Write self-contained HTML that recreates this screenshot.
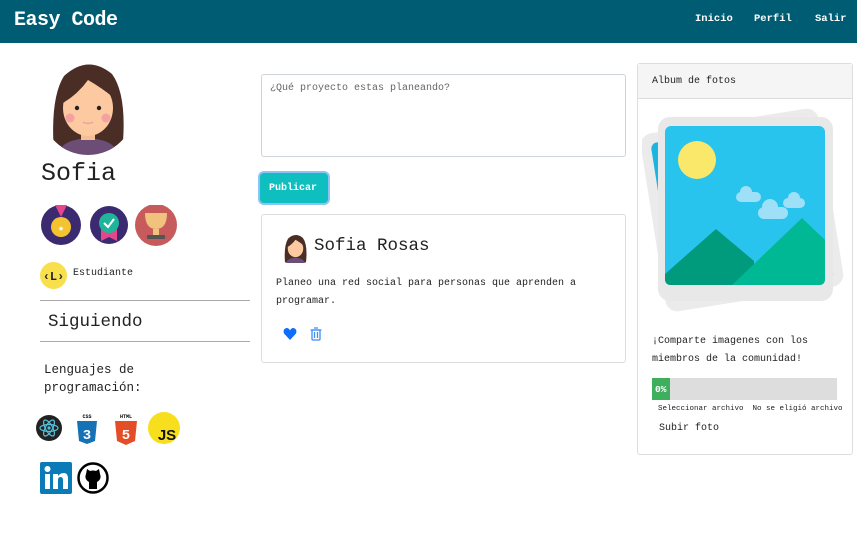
<!DOCTYPE html>
<html><head><meta charset="utf-8">
<style>
*{margin:0;padding:0;box-sizing:border-box}
body{width:857px;height:544px;background:#fff;font-family:"Liberation Mono","DejaVu Sans Mono",monospace;color:#222;position:relative;overflow:hidden}
.a{position:absolute}
.hdr{left:0;top:0;width:857px;height:43px;background:#005c73}
.t10{font-size:10px}
</style></head><body>
<div class="a hdr"></div>
<div class="a" style="left:14px;top:9px;font-size:20px;color:#fff;font-weight:bold;letter-spacing:-0.5px">Easy Code</div>
<div class="a" style="left:695px;top:13px;font-size:10.5px;color:#fff;font-weight:bold">Inicio</div>
<div class="a" style="left:754px;top:13px;font-size:10.5px;color:#fff;font-weight:bold">Perfil</div>
<div class="a" style="left:815px;top:13px;font-size:10.5px;color:#fff;font-weight:bold">Salir</div>

<svg class="a" style="left:50px;top:58px" width="76" height="97" viewBox="0 0 76 97">
<defs><clipPath id="c"><circle cx="38" cy="50" r="47"/></clipPath></defs>
<g clip-path="url(#c)">
<path d="M4 95 Q0 40 14 18 Q38 -4 62 16 Q78 38 72 95Z" fill="#4a2e25"/>
<path d="M8 97 Q10 82 38 80 Q66 82 68 97Z" fill="#6b4d76"/>
<rect x="31" y="66" width="14" height="16" fill="#f4bf95"/>
<ellipse cx="38" cy="50" rx="25" ry="28" fill="#fcc9a0"/>
<path d="M13 45 Q14 15 42 14 Q62 16 64 40 Q52 30 38 22 Q28 36 13 45Z" fill="#4a2e25"/>
<circle cx="27" cy="50" r="2.2" fill="#222"/><circle cx="49" cy="50" r="2.2" fill="#222"/>
<circle cx="20" cy="60" r="4.5" fill="#f4a1a1"/><circle cx="56" cy="60" r="4.5" fill="#f4a1a1"/>
<path d="M33 64 Q38 67 43 64" stroke="#e99" stroke-width="1.2" fill="none"/>
</g></svg>
<div class="a" style="left:41px;top:159px;font-size:25px">Sofia</div>

<svg class="a" style="left:41px;top:205px" width="138" height="42">
<circle cx="20" cy="20" r="20" fill="#3b2a70"/><path d="M14 0 L20 12 L26 0Z" fill="#e5478d"/><circle cx="20" cy="22" r="10" fill="#f4c430"/><text x="20" y="26" font-size="10" text-anchor="middle" fill="#fff">★</text>
<circle cx="68" cy="20" r="19" fill="#3b2a70"/><path d="M60 24 L60 36 L68 32 L76 36 L76 24Z" fill="#e5478d"/><circle cx="68" cy="18" r="10" fill="#1fb59a"/><path d="M63 18 L67 22 L73 14" stroke="#fff" stroke-width="2" fill="none"/>
<circle cx="115" cy="20" r="21" fill="#c75b5b"/><path d="M104 8 H126 Q126 24 115 24 Q104 24 104 8Z" fill="#f1c27d"/><rect x="112" y="24" width="6" height="6" fill="#f1c27d"/><rect x="106" y="30" width="18" height="4" fill="#555"/>
</svg>
<svg class="a" style="left:40px;top:262px" width="27" height="27"><circle cx="13.5" cy="13.5" r="13.5" fill="#f8df4c"/><text x="13.5" y="18" font-size="12" font-weight="bold" text-anchor="middle" fill="#222" font-family="Liberation Mono">‹L›</text></svg>
<div class="a t10" style="left:73px;top:268px">Estudiante</div>
<div class="a" style="left:40px;top:300px;width:210px;height:1px;background:#aaa"></div>
<div class="a" style="left:48px;top:312px;font-size:17.5px">Siguiendo</div>
<div class="a" style="left:40px;top:341px;width:210px;height:1px;background:#aaa"></div>
<div class="a" style="left:44px;top:361px;font-size:12.5px;line-height:18px">Lenguajes de<br>programación:</div>

<svg class="a" style="left:35px;top:412px" width="150" height="34">
<circle cx="14" cy="16" r="13" fill="#222"/><g stroke="#53c1de" fill="none" stroke-width="1.2"><ellipse cx="14" cy="16" rx="9" ry="3.5"/><ellipse cx="14" cy="16" rx="9" ry="3.5" transform="rotate(60 14 16)"/><ellipse cx="14" cy="16" rx="9" ry="3.5" transform="rotate(-60 14 16)"/></g><circle cx="14" cy="16" r="1.6" fill="#53c1de"/>
<text x="52" y="6" font-size="5" font-weight="bold" text-anchor="middle">CSS</text><path d="M42 9 H62 L60 29 L52 32 L44 29Z" fill="#1572b6"/><text x="52" y="27" font-size="14" font-weight="bold" text-anchor="middle" fill="#fff">3</text>
<text x="91" y="6" font-size="5" font-weight="bold" text-anchor="middle">HTML</text><path d="M80 9 H102 L100 29 L91 33 L82 29Z" fill="#e44d26"/><text x="91" y="27" font-size="14" font-weight="bold" text-anchor="middle" fill="#fff">5</text>
<circle cx="129" cy="16" r="16" fill="#f7df1e"/><text x="132" y="28" font-size="15" font-weight="bold" text-anchor="middle" fill="#111" font-family="Liberation Sans">JS</text>
</svg>
<svg class="a" style="left:40px;top:462px" width="70" height="32">
<rect x="0" y="0" width="32" height="32" rx="2" fill="#0a7bb6"/><rect x="5" y="12" width="5" height="15" fill="#fff"/><circle cx="7.5" cy="7" r="3" fill="#fff"/><path d="M13 12 H18 V14 Q20 11 24 11 Q28 11 28 17 V27 H23 V18 Q23 15 20.5 15 Q18 15 18 18 V27 H13Z" fill="#fff"/>
<circle cx="53" cy="16" r="14.5" fill="#fff" stroke="#000" stroke-width="2.5"/><path d="M46 12 L47 7 L50 9 Q53 8 56 9 L59 7 L60 12 Q62 17 57 20 L57 27 H49 L49 20 Q44 17 46 12Z" fill="#000"/>
</svg>

<div class="a" style="left:261px;top:74px;width:365px;height:83px;border:1px solid #ced4da;border-radius:3px"></div>
<div class="a t10" style="left:270px;top:83px;color:#666">¿Qué proyecto estas planeando?</div>
<div class="a" style="left:260px;top:173px;width:68px;height:30px;border-radius:4px;background:#0fbfbf;box-shadow:0 0 0 2px #8ec3f5"></div>
<div class="a t10" style="left:269px;top:183px;color:#fff;font-weight:bold">Publicar</div>
<div class="a" style="left:261px;top:214px;width:365px;height:149px;border:1px solid #ddd;border-radius:3px"></div>
<svg class="a" style="left:283px;top:233px" width="25" height="30" viewBox="0 0 76 97"><path d="M4 95 Q0 40 14 18 Q38 -4 62 16 Q78 38 72 95Z" fill="#4a2e25"/><path d="M8 97 Q10 82 38 80 Q66 82 68 97Z" fill="#6b4d76"/><ellipse cx="38" cy="50" rx="25" ry="28" fill="#fcc9a0"/><path d="M13 45 Q14 15 42 14 Q62 16 64 40 Q52 30 38 22 Q28 36 13 45Z" fill="#4a2e25"/></svg>
<div class="a" style="left:314px;top:236px;font-size:17.5px">Sofia Rosas</div>
<div class="a t10" style="left:276px;top:275px;line-height:18px">Planeo una red social para personas que aprenden a<br>programar.</div>
<svg class="a" style="left:283px;top:327px" width="40" height="14"><path d="M7 13 L1 6.5 Q-0.5 2 3.5 1 Q6 1 7 3.5 Q8 1 10.5 1 Q14.5 2 13 6.5Z" fill="#0d6efd"/><g stroke="#3d8ef7" fill="none" stroke-width="1.3"><rect x="29" y="3" width="8" height="10" rx="1"/><path d="M27.5 3 H38.5 M31 1 H35 M31.5 5 V11 M34.5 5 V11"/></g></svg>

<div class="a" style="left:637px;top:63px;width:216px;height:392px;border:1px solid #ddd;border-radius:3px"></div>
<div class="a" style="left:638px;top:64px;width:214px;height:35px;background:#f5f5f5;border-bottom:1px solid #ddd"></div>
<div class="a t10" style="left:652px;top:76px">Album de fotos</div>
<svg class="a" style="left:642px;top:100px" width="210" height="215">
<g transform="rotate(-9 100 110)"><rect x="10" y="20" width="180" height="180" rx="12" fill="#ebebeb"/><rect x="20" y="30" width="160" height="158" rx="6" fill="#1bb5e0"/><rect x="20" y="150" width="160" height="38" fill="#00a585"/></g>
<rect x="16" y="17" width="175" height="184" rx="12" fill="#e8e8e8"/>
<rect x="23" y="26" width="160" height="159" rx="6" fill="#29c4ed"/>
<circle cx="55" cy="60" r="19" fill="#f9e86a"/>
<g fill="#9ee0f7"><rect x="94" y="92" width="25" height="10" rx="5"/><circle cx="104" cy="92" r="6"/><rect x="116" y="107" width="30" height="12" rx="6"/><circle cx="128" cy="107" r="8"/><rect x="141" y="98" width="22" height="10" rx="5"/><circle cx="152" cy="98" r="6"/></g>
<path d="M23 174 L74 129 L112 161 L112 185 L29 185 Q23 185 23 179Z" fill="#009a7c"/>
<path d="M90 185 L160 118 L183 140 L183 179 Q183 185 177 185Z" fill="#00b894"/>
</svg>
<div class="a t10" style="left:652px;top:333px;line-height:18px">¡Comparte imagenes con los<br>miembros de la comunidad!</div>
<div class="a" style="left:652px;top:378px;width:185px;height:22px;background:#ddd"></div>
<div class="a" style="left:652px;top:378px;width:18px;height:22px;background:#3eaf5c"></div>
<div class="a" style="left:655px;top:384px;font-size:9.5px;color:#fff;font-weight:bold">0%</div>
<div class="a" style="left:658px;top:405px;font-size:7.5px">Seleccionar archivo &nbsp;No se eligió archivo</div>
<div class="a t10" style="left:659px;top:423px">Subir foto</div>
</body></html>
